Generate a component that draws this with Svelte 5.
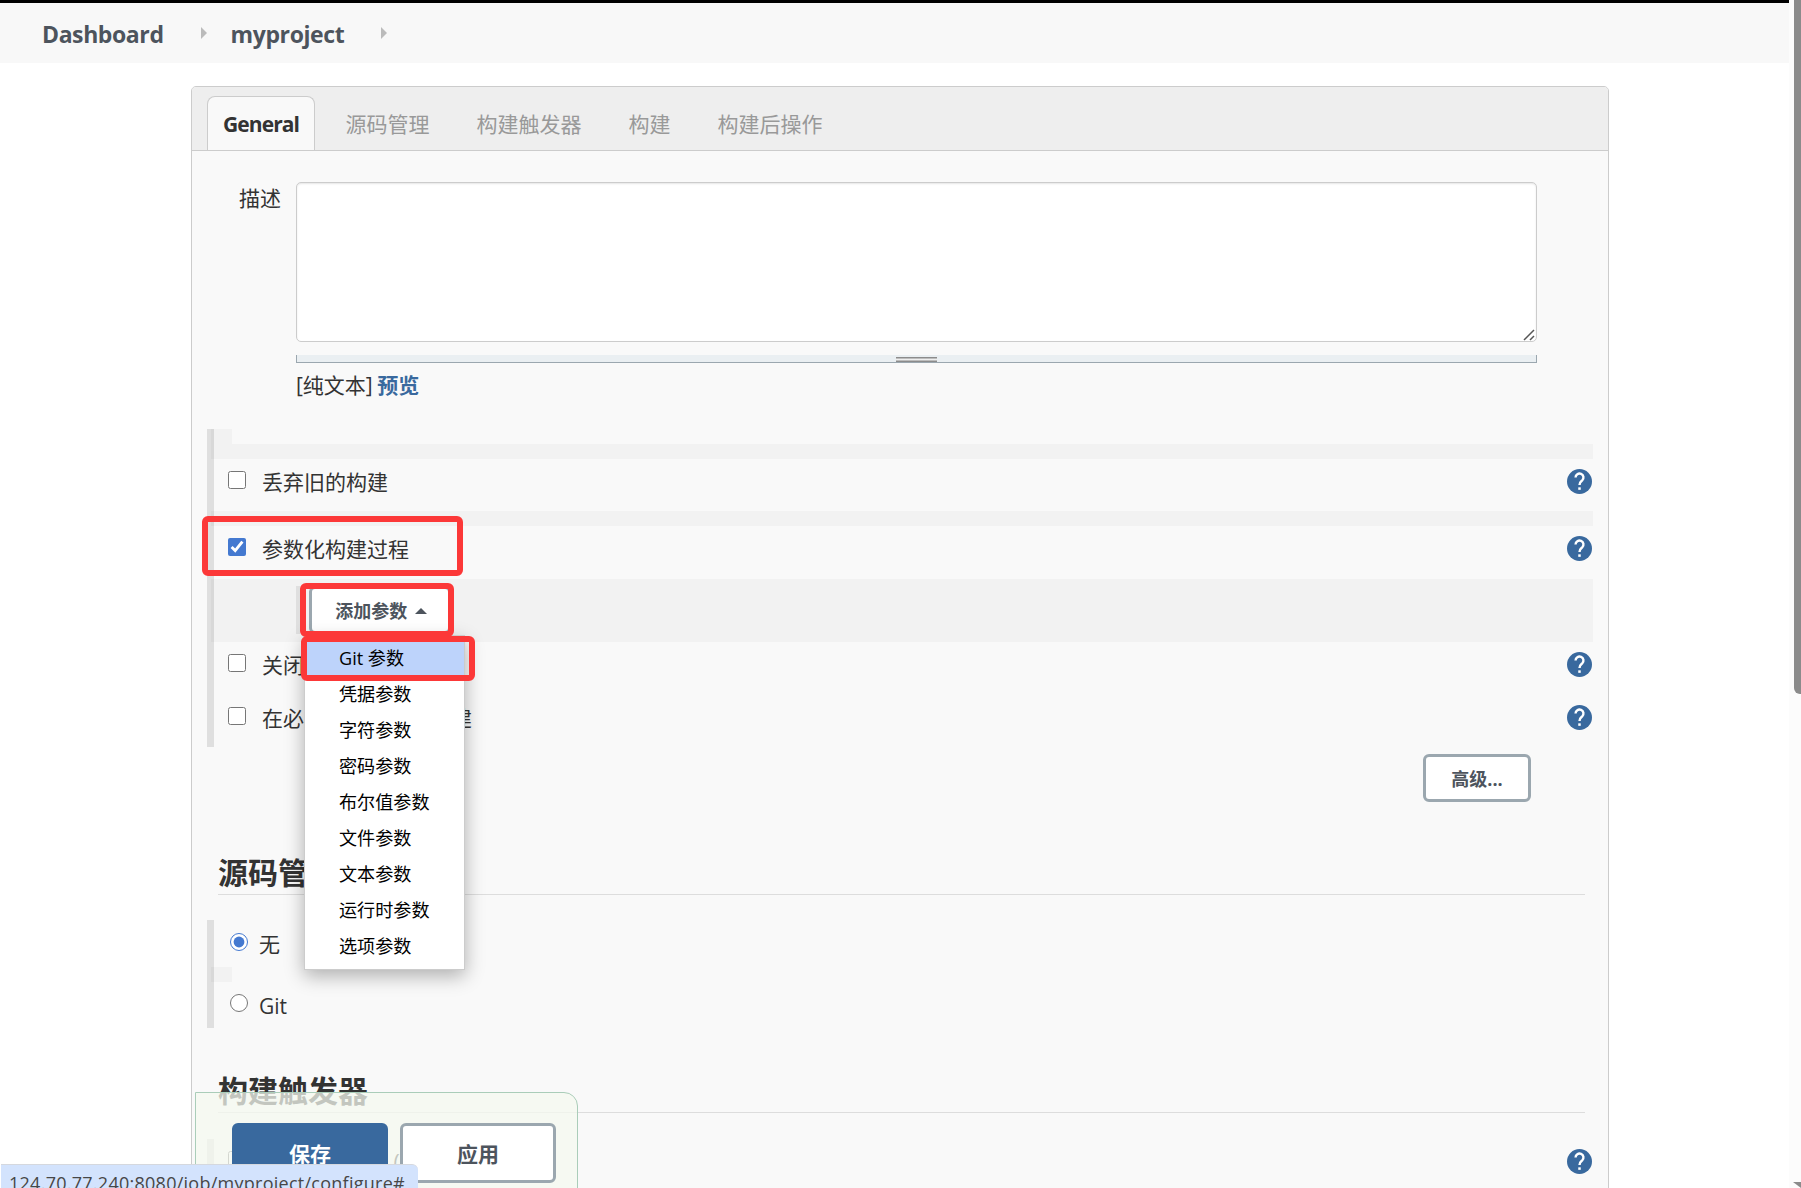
<script lang="ts">
	interface Option {
		label: string;
		checked: boolean;
	}

	const crumbs = ['Dashboard', 'myproject'];
	const tabs = ['General', '源码管理', '构建触发器', '构建', '构建后操作'];
	const paramTypes = [
		'Git 参数',
		'凭据参数',
		'字符参数',
		'密码参数',
		'布尔值参数',
		'文件参数',
		'文本参数',
		'运行时参数',
		'选项参数'
	];

	let activeTab = $state('General');
	let hovered = $state('Git 参数');
	let scm = $state('无');
	let description = $state('');
	let discard: Option = $state({ label: '丢弃旧的构建', checked: false });
	let parameterized: Option = $state({ label: '参数化构建过程', checked: true });
	let disable: Option = $state({ label: '关闭构建', checked: false });
	let concurrent: Option = $state({ label: '在必要的时候并发构建', checked: false });
	let remote: Option = $state({ label: '触发远程构建 (例如,使用脚本)', checked: false });
</script>

{#snippet help()}
	<svg class="help" viewBox="0 0 24 24" aria-hidden="true">
		<path fill="#39699e" d="M12 0a12 12 0 1 0 0 24a12 12 0 1 0 0-24z" />
		<path d="M8.2 8.1a3.8 3.8 0 1 1 6.4 2.8c-1.6 1.4-2.6 2-2.6 4.4" fill="none" stroke="#fff" stroke-width="2.3" />
		<path fill="#fff" d="M10.8 17.6h2.4V20h-2.4z" />
	</svg>
{/snippet}

{#snippet optionRow(option: Option)}
	<div class="row">
		<label>
			<input type="checkbox" bind:checked={option.checked} />
			<span>{option.label}</span>
		</label>
		{@render help()}
	</div>
{/snippet}

<div class="page">
	<header class="breadcrumbs">
		{#each crumbs as crumb}
			<a href="#top">{crumb}</a>
			<i class="arrow"></i>
		{/each}
	</header>

	<main class="panel">
		<nav class="tabs">
			{#each tabs as tab}
				<button class="tab" class:active={tab === activeTab} onclick={() => (activeTab = tab)}>{tab}</button>
			{/each}
		</nav>

		<section class="description">
			<span class="field-name">描述</span>
			<div class="field">
				<textarea bind:value={description} aria-label="描述"></textarea>
				<svg class="resizer" viewBox="0 0 12 12" aria-hidden="true">
					<path d="M1 11L11 1M7 11l4-4" fill="none" stroke="#555" stroke-width="1.5" />
				</svg>
				<div class="handle"><i></i></div>
				<p>[纯文本] <a href="#preview">预览</a></p>
			</div>
		</section>

		<section class="group options">
			<div class="stub"></div>
			<div class="stripe"></div>
			{@render optionRow(discard)}
			<div class="stripe"></div>
			{@render optionRow(parameterized)}
			<div class="params">
				<div class="params-inner">
					<button class="btn add">添加参数 <i class="caret"></i></button>
					<ul class="menu">
						{#each paramTypes as type}
							<li class:selected={type === hovered} onmouseenter={() => (hovered = type)}>{type}</li>
						{/each}
					</ul>
				</div>
			</div>
			{@render optionRow(disable)}
			{@render optionRow(concurrent)}
			<div class="mark mark-option"></div>
			<div class="mark mark-add"></div>
			<div class="mark mark-git"></div>
		</section>

		<div class="advanced">
			<button class="btn">高级...</button>
		</div>

		<h2>源码管理</h2>
		<section class="group scm">
			<label>
				<input type="radio" value="无" bind:group={scm} />
				<span>无</span>
			</label>
			<div class="stub"></div>
			<label>
				<input type="radio" value="Git" bind:group={scm} />
				<span>Git</span>
			</label>
		</section>

		<h2 class="triggers-title">构建触发器</h2>
		<section class="group triggers">
			{@render optionRow(remote)}
		</section>
	</main>

	<footer class="save-bar">
		<button class="btn primary">保存</button>
		<button class="btn large">应用</button>
	</footer>

	<div class="status">124.70.77.240:8080/job/myproject/configure#</div>

	<div class="scrollbar">
		<div class="thumb"></div>
		<div class="scroll-end"></div>
	</div>
</div>

<style>
	:global(body) {
		margin: 0;
		overflow: hidden;
	}

	.page {
		position: relative;
		box-sizing: border-box;
		width: 1801px;
		height: 1188px;
		overflow: hidden;
		background: #fff;
		color: #333;
		font-family: 'Open Sans', 'Noto Sans CJK SC', sans-serif;
		font-size: 21px;
		line-height: 30px;
	}

	.page * {
		box-sizing: border-box;
	}

	button {
		font-family: inherit;
		cursor: pointer;
	}

	.breadcrumbs {
		display: flex;
		align-items: center;
		width: 1789px;
		height: 63px;
		padding-left: 42px;
		border-top: 3px solid #000;
		background: #f8f8f8;
	}

	.breadcrumbs a {
		padding-top: 2px;
		color: #4d545d;
		font-size: 23px;
		font-weight: 700;
		letter-spacing: -0.4px;
		text-decoration: none;
	}

	.arrow {
		margin: 0 25px 0 37px;
		border: 6px solid transparent;
		border-right: 0;
		border-left-color: #bbb;
	}

	.arrow + a {
		margin-left: -1px;
	}

	.panel {
		width: 1418px;
		height: 1140px;
		margin: 23px 0 0 191px;
		border: 1px solid #ccc;
		border-radius: 5px 5px 0 0;
		background: #f9f9f9;
	}

	.tabs {
		display: flex;
		height: 64px;
		padding: 9px 0 0 15px;
		border-bottom: 1px solid #ccc;
		background: #eee;
		border-radius: 4px 4px 0 0;
	}

	.tab {
		height: 54px;
		padding: 0 22.5px;
		border: 1px solid transparent;
		border-bottom: 0;
		background: none;
		color: #999;
		font-size: 21px;
		line-height: 50px;
	}

	.tab.active {
		width: 108px;
		margin-right: 7px;
		padding: 0;
		border-color: #ccc;
		border-radius: 8px 8px 0 0;
		background: #f9f9f9;
		color: #333;
		font-weight: 700;
		letter-spacing: -0.9px;
	}

	.description {
		display: flex;
		height: 278px;
		padding-top: 31px;
	}

	.field-name {
		width: 104px;
		padding: 1px 0 0 47px;
	}

	.field {
		position: relative;
		width: 1241px;
	}

	textarea {
		display: block;
		width: 100%;
		height: 160px;
		border: 1px solid #ccc;
		border-radius: 5px;
		background: #fff;
		box-shadow: inset 0 1px 2px rgba(0, 0, 0, 0.1);
		outline: none;
		resize: none;
	}

	.resizer {
		position: absolute;
		top: 147px;
		right: 2px;
		width: 12px;
		height: 12px;
	}

	.handle {
		display: flex;
		justify-content: center;
		height: 8px;
		margin-top: 13px;
		border: 1px solid #9ba7af;
		border-top: 0;
		background: #eaeff2;
	}

	.handle i {
		width: 41px;
		height: 5px;
		margin-top: 2px;
		border: solid #8c8c8c;
		border-width: 1px 0;
		background: linear-gradient(#bdbdbd 1px, #eee 1px 2px, #bdbdbd 2px);
	}

	.field p {
		margin: 7px 0 0;
	}

	.field a {
		margin-left: -1px;
		color: #39699e;
		font-weight: 700;
		text-decoration: none;
	}

	.group {
		position: relative;
		margin: 0 15px;
		border-left: 7px solid #dfdfdf;
	}

	.stub,
	.stripe {
		height: 15px;
		margin-left: -3px;
		background: rgba(0, 0, 0, 0.028);
	}

	.stub {
		width: 21px;
	}

	.row {
		display: flex;
		justify-content: space-between;
		height: 53px;
		padding: 9px 1px 0 14px;
	}

	.stub + .stripe + .row {
		height: 52px;
	}

	label {
		display: flex;
	}

	.row span {
		margin-top: -1px;
	}

	input {
		flex: none;
		width: 18px;
		height: 18px;
		margin: 3px 16px 0 0;
		accent-color: #4479d0;
	}

	.help {
		width: 25px;
		height: 25px;
		margin-top: 1px;
	}

	.options {
		height: 318px;
	}

	.params {
		height: 63px;
		margin-left: -3px;
		padding: 7px 0 0 85px;
		background: rgba(0, 0, 0, 0.028);
	}

	.params-inner {
		position: relative;
		width: 170px;
		height: 48px;
		padding-left: 9px;
		border-left: 4px solid #dfdfdf;
	}

	.btn {
		height: 48px;
		border: 3px solid #9ba7af;
		border-radius: 6px;
		background: #fff;
		color: #4d545d;
		font-size: 18px;
		font-weight: 700;
	}

	.add {
		width: 142px;
		padding: 0 0 0 2px;
	}

	.caret {
		display: inline-block;
		margin: 0 0 4px 3px;
		border: 6px solid transparent;
		border-top: 0;
		border-bottom-color: #4d545d;
	}

	.menu {
		position: absolute;
		z-index: 2;
		top: 49px;
		left: 4px;
		width: 161px;
		height: 335px;
		margin: 0;
		padding: 4px 0 0;
		border: 1px solid #ccc;
		background: #fff;
		box-shadow: 0 6px 18px rgba(0, 0, 0, 0.3);
		color: #000;
		font-size: 18.1px;
		list-style: none;
	}

	.menu li {
		height: 36px;
		padding-left: 34px;
		line-height: 36px;
	}

	.menu .selected {
		background: #bdd3fb;
	}

	/* red callouts laid over the form */
	.mark {
		position: absolute;
		z-index: 3;
		border: 6px solid #fc3838;
		border-radius: 6px;
		pointer-events: none;
	}

	.mark-option {
		top: 87px;
		left: -12px;
		width: 261px;
		height: 60px;
	}

	.mark-add {
		top: 154px;
		left: 86px;
		width: 154px;
		height: 54px;
	}

	.mark-git {
		top: 207px;
		left: 87px;
		width: 174px;
		height: 45px;
	}

	.advanced {
		display: flex;
		justify-content: flex-end;
		padding: 7px 77px 0 0;
	}

	.advanced .btn {
		width: 108px;
	}

	h2 {
		height: 46px;
		margin: 47px 23px 0 26px;
		border-bottom: 1px solid #ddd;
		font-size: 30px;
		font-weight: 700;
		line-height: 47px;
	}

	.scm {
		height: 108px;
		margin-top: 25px;
	}

	.scm label {
		height: 47px;
		padding: 9px 0 0 16px;
	}

	.scm input {
		margin: 4px 11px 0 0;
	}

	.scm .stub + label {
		padding-top: 8px;
	}

	.scm .stub + label span {
		margin-top: 1px;
	}

	.triggers-title {
		margin-top: 39px;
	}

	.triggers {
		margin-top: 26px;
	}

	.save-bar {
		position: absolute;
		top: 1092px;
		left: 195px;
		display: flex;
		gap: 12px;
		width: 383px;
		height: 110px;
		padding: 30px 0 0 36px;
		border: 1px solid #aacdb9;
		border-radius: 0 14px 0 0;
		background: rgba(244, 248, 239, 0.75);
	}

	.primary,
	.large {
		width: 156px;
		height: 60px;
		font-size: 21px;
	}

	.primary {
		border-color: #39699e;
		background: #39699e;
		color: #fff;
	}

	.status {
		position: absolute;
		top: 1164px;
		left: 1px;
		width: 417px;
		height: 34px;
		padding: 3px 0 0 8px;
		border-top: 1px solid #d5d8de;
		border-radius: 0 6px 0 0;
		background: #d3e3fd;
		color: #474747;
		font-size: 18px;
		letter-spacing: 0.26px;
		white-space: nowrap;
	}

	.scrollbar {
		position: absolute;
		top: 0;
		right: 0;
		display: flex;
		flex-direction: column;
		align-items: flex-end;
		justify-content: space-between;
		width: 12px;
		height: 1188px;
		background: #fcfcfc;
	}

	.thumb {
		width: 7px;
		height: 694px;
		border-radius: 0 0 0 6px;
		background: #8b8b8b;
	}

	.scroll-end {
		border: solid transparent;
		border-width: 6px 0 0 8px;
		border-top-color: #8b8b8b;
	}
</style>
